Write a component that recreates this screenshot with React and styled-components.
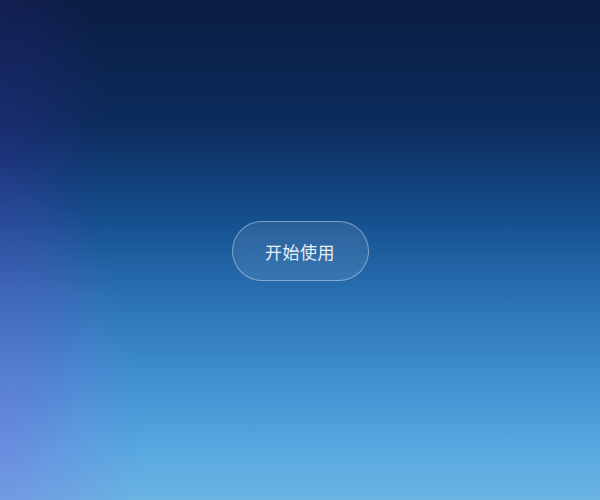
import React from "react";
import styled, { createGlobalStyle } from "styled-components";

const GlobalStyle = createGlobalStyle`
  html, body, #root {
    margin: 0;
    padding: 0;
    height: 100%;
  }
  body {
    font-family: "Noto Sans CJK SC", "Noto Sans", sans-serif;
  }
`;

const Splash = styled.div`
  position: relative;
  height: 100vh;
  display: flex;
  align-items: center;
  justify-content: center;
  overflow: hidden;
  background: linear-gradient(
    180deg,
    #0a1c41 0%,
    #0c2c5d 25%,
    #165291 45%,
    #2a72b4 60%,
    #3f8ecf 75%,
    #58a8e0 90%,
    #6ab4e3 100%
  );
  &::before {
    content: "";
    position: absolute;
    inset: 0;
    background:
      radial-gradient(ellipse 140px 280px at 0% 88%, rgba(125, 120, 225, 0.5), rgba(125, 120, 225, 0) 100%),
      radial-gradient(ellipse 110px 320px at 0% 35%, rgba(55, 45, 150, 0.35), rgba(55, 45, 150, 0) 100%);
    pointer-events: none;
  }
`;

const StartButton = styled.button`
  position: relative;
  width: 137px;
  height: 60px;
  border-radius: 30px;
  border: 1.5px solid rgba(255, 255, 255, 0.38);
  background: rgba(255, 255, 255, 0.09);
  color: #e9f1f9;
  font-family: "Noto Sans CJK SC", "Noto Sans", sans-serif;
  font-size: 17px;
  letter-spacing: 0.5px;
  cursor: pointer;
  padding: 0;
  margin-top: 2px;
`;

const App = () => {
  return (
    <>
      <GlobalStyle />
      <Splash>
        <StartButton>开始使用</StartButton>
      </Splash>
    </>
  );
};

export default App;
